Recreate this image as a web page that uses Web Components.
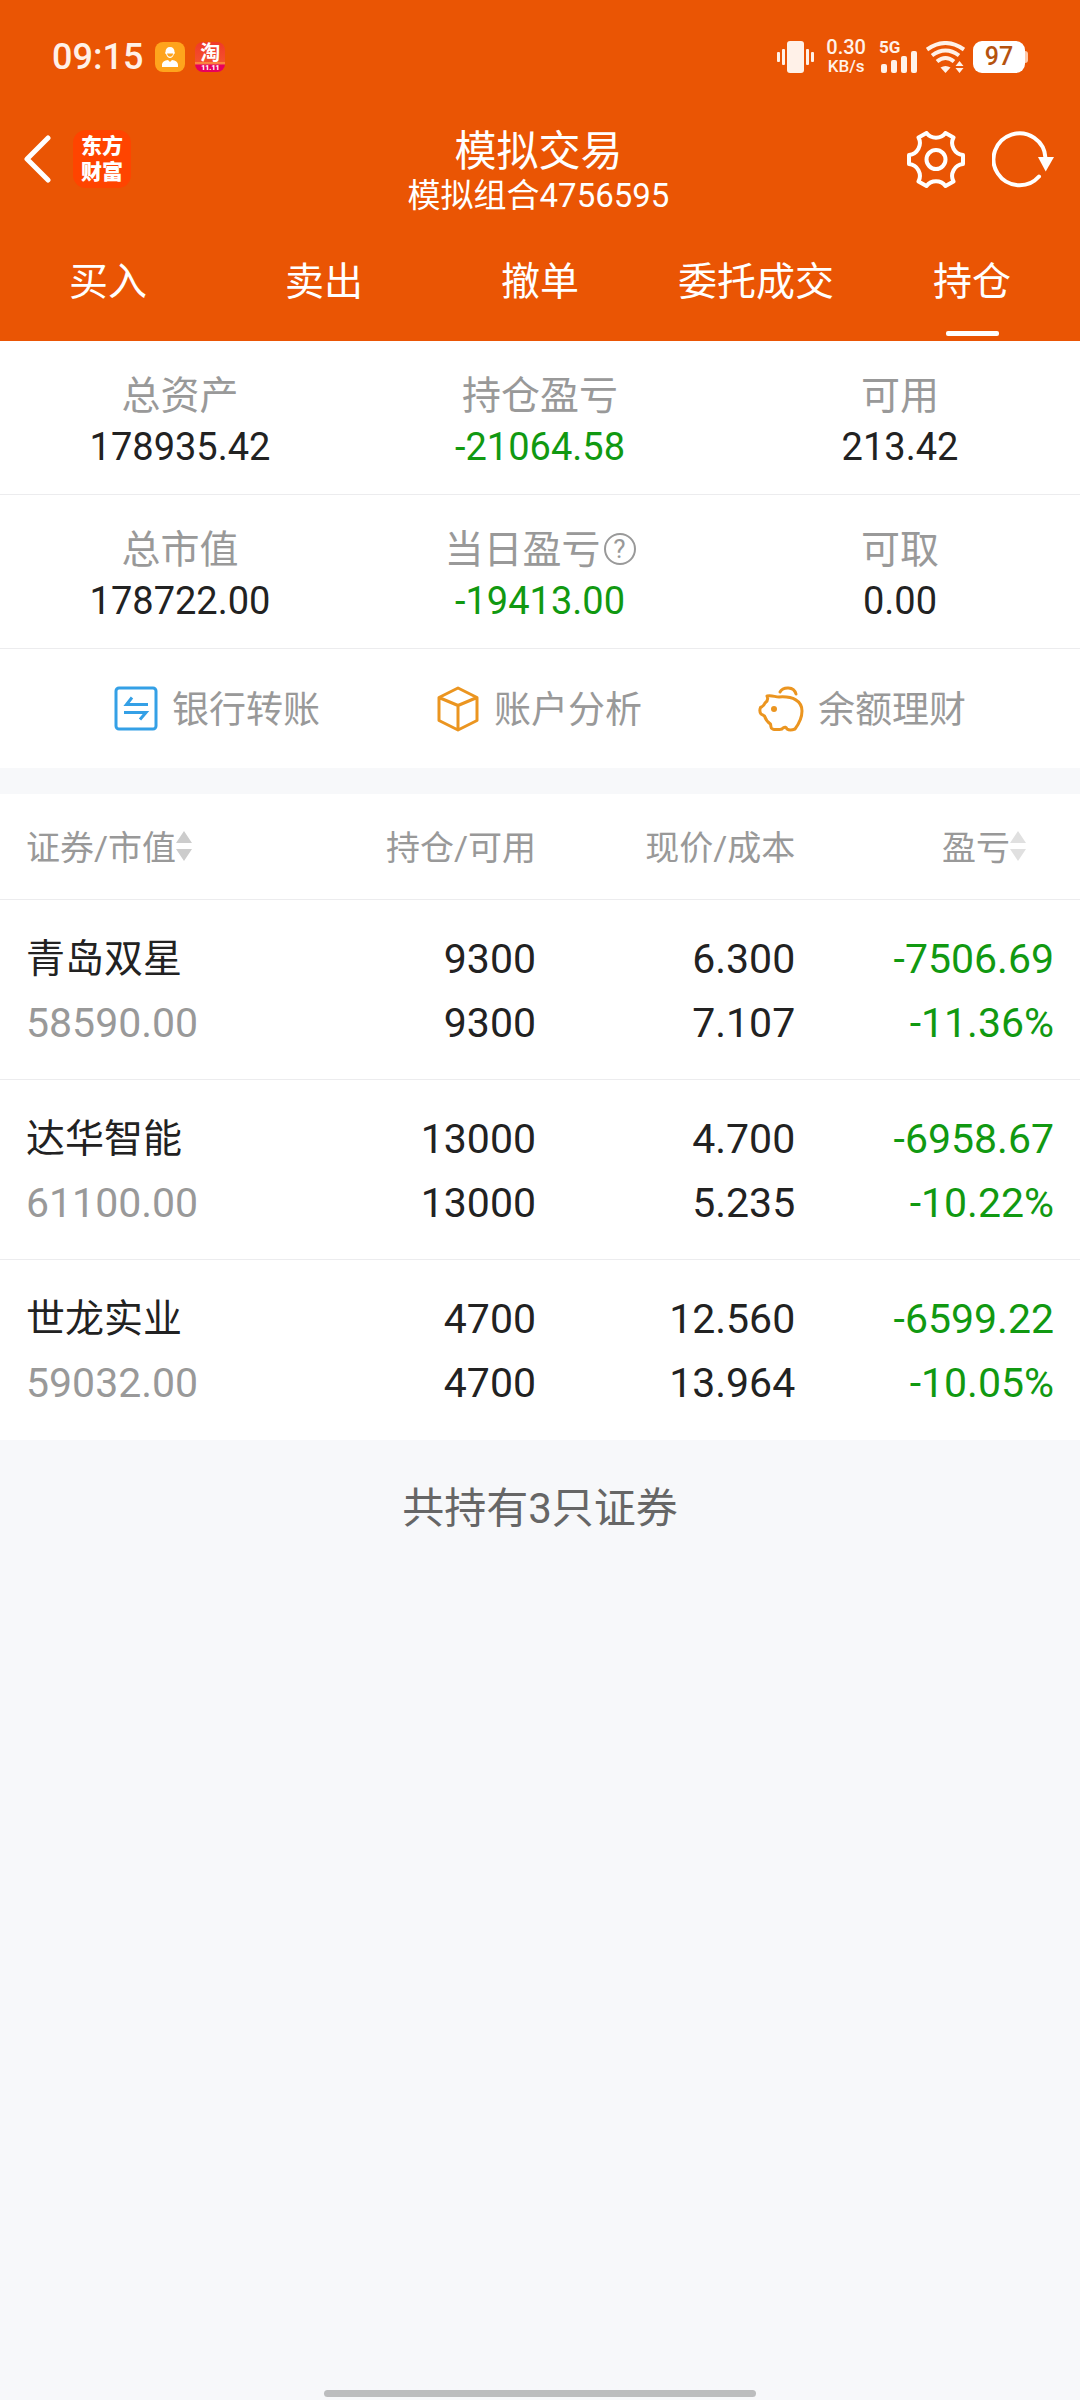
<!DOCTYPE html>
<html lang="zh-CN">
<head>
<meta charset="utf-8">
<meta name="viewport" content="width=device-width, initial-scale=1">
<title>模拟交易</title>
<style>
    :root {
        --brand: #ea5504;
        --ink: #222;
        --muted: #999;
        --fall: #119911;
        --line: #ececee;
        --page: #f7f8fa;
    }
    body {
        margin: 0;
        min-height: 100vh;
        display: flex;
        flex-direction: column;
        background: var(--page);
        color: var(--ink);
        font-family: Roboto, "Noto Sans CJK SC", sans-serif;
    }
    header {
        background: var(--brand);
        color: #fff;
    }
    .summary {
        background: #fff;
        margin-bottom: 26px;
    }
</style>
</head>
<body>

<header>
    <status-bar time="09:15" speed="0.30" battery="97"></status-bar>
    <title-bar>
        模拟交易
        <span slot="account">模拟组合4756595</span>
    </title-bar>
    <tab-list>
        <tab-link>买入</tab-link>
        <tab-link>卖出</tab-link>
        <tab-link>撤单</tab-link>
        <tab-link>委托成交</tab-link>
        <tab-link active>持仓</tab-link>
    </tab-list>
</header>

<main>
    <section class="summary">
        <figure-row>
            <asset-figure label="总资产">178935.42</asset-figure>
            <asset-figure label="持仓盈亏" fall>-21064.58</asset-figure>
            <asset-figure label="可用">213.42</asset-figure>
        </figure-row>
        <figure-row>
            <asset-figure label="总市值">178722.00</asset-figure>
            <asset-figure label="当日盈亏" fall help>-19413.00</asset-figure>
            <asset-figure label="可取">0.00</asset-figure>
        </figure-row>
        <service-links></service-links>
    </section>
    <holdings-table></holdings-table>
</main>

<home-indicator></home-indicator>

<script>
class StatusBar extends HTMLElement {

    constructor() {
        super();
        this.shadow = this.attachShadow({ mode: 'open' });
    }

    connectedCallback() {
        this.render();
    }

    render() {

        this.shadow.innerHTML =
        `
        <style>
            :host {
                display: flex;
                align-items: center;
                height: 114px;
                padding: 0 52px;
                color: #fff1e8;
                font-weight: 500;
            }
            svg {
                display: block;
            }
            .time {
                font-size: 36px;
                line-height: 40px;
                margin-right: 12px;
            }
            .app {
                width: 30px;
                height: 30px;
                border-radius: 8px;
                overflow: hidden;
                margin-right: 10px;
            }
            .contact {
                background: #ffa41c;
            }
            .taobao {
                background: linear-gradient(180deg, #f03a28 0, #f4502c 65%, #ffa040 70%, #e8005c 78%);
                color: #fff;
                text-align: center;
            }
            .taobao b {
                display: block;
                font-size: 20px;
                line-height: 23px;
            }
            .taobao small {
                display: block;
                font-size: 7px;
                font-weight: 900;
                line-height: 7px;
            }
            .right {
                display: flex;
                align-items: center;
                margin-left: auto;
            }
            .speed {
                margin: 0 13px 0 12px;
                text-align: center;
                font-size: 20px;
                line-height: 19px;
            }
            .speed small {
                display: block;
                font-size: 17px;
            }
            .signal {
                margin-right: 9px;
                font-size: 17px;
                font-weight: 700;
                line-height: 12px;
            }
            .signal svg {
                margin: -2px 0 0 2px;
            }
            .battery {
                display: flex;
                align-items: center;
                margin-left: 8px;
            }
            .battery span {
                width: 52px;
                background: #fff;
                border-radius: 9px;
                color: #b5530f;
                font-size: 25px;
                line-height: 32px;
                text-align: center;
            }
            .battery::after {
                content: "";
                width: 3px;
                height: 12px;
                border-radius: 0 3px 3px 0;
                background: #ffc9a8;
            }
        </style>
        <span class="time">${this.getAttribute('time')}</span>
        <div class="app contact">
            <svg width="30" height="30" viewBox="0 0 30 30" fill="#fff">
                <path d="M15 5c3 0 4.500 2 4.500 5 1 1 0 2-.600 2-.700 2.500-2.200 4-3.900 4s-3.200-1.500-3.900-4c-.600 0-1.600-1-.600-2C10.500 7 12 5 15 5z"/>
                <path d="M12 11.500h6.200c-.500 2.200-1.500 3.300-3.100 3.300S12.500 13.700 12 11.500z" fill="#ffa41c"/>
                <path d="M7 25v-2c0-3 2.500-4.500 6-5l2 2 2-2c3.500.5 6 2 6 5v2z"/>
            </svg>
        </div>
        <div class="app taobao"><b>淘</b><small>11.11</small></div>
        <div class="right">
            <svg width="37" height="32" viewBox="0 0 37 32" fill="currentColor">
                <rect x="10" y="0" width="17" height="32" rx="3"/>
                <rect x="0" y="11" width="3" height="10" rx="1"/>
                <rect x="5" y="8" width="3" height="16" rx="1"/>
                <rect x="29" y="8" width="3" height="16" rx="1"/>
                <rect x="34" y="11" width="3" height="10" rx="1"/>
            </svg>
            <div class="speed">${this.getAttribute('speed')}<small>KB/s</small></div>
            <div class="signal">5G
                <svg width="36" height="22" viewBox="0 0 36 22" fill="currentColor">
                    <rect x="0" y="13" width="6" height="9" rx="2"/>
                    <rect x="10" y="9" width="6" height="13" rx="2"/>
                    <rect x="20" y="5" width="6" height="17" rx="2"/>
                    <rect x="30" y="0" width="6" height="22" rx="2"/>
                </svg>
            </div>
            <svg width="39" height="32" viewBox="0 0 39 32" fill="none" stroke="currentColor" stroke-width="4">
                <path d="M1 8.500Q19.500-4.500 38 8.500"/>
                <path d="M6 14.500Q19.500 4.500 33 14.500"/>
                <path d="M11 20.500Q19.500 13.500 28 20.500"/>
                <path d="M14.500 26.500Q19.500 23.500 24.500 26.500L19.500 32z" fill="currentColor" stroke="none"/>
                <path d="M29.500 25l4-5 4 5zM29.500 27h8l-4 5z" fill="currentColor" stroke="none"/>
            </svg>
            <div class="battery"><span>${this.getAttribute('battery')}</span></div>
        </div>`;
    }
}

class TitleBar extends HTMLElement {

    constructor() {
        super();
        this.shadow = this.attachShadow({ mode: 'open' });
    }

    connectedCallback() {
        this.render();
    }

    render() {

        this.shadow.innerHTML =
        `
        <style>
            :host {
                display: grid;
                grid-template-columns: 1fr auto 1fr;
                padding: 12px 26px 0 23px;
            }
            svg {
                display: block;
            }
            .side {
                display: flex;
                align-items: center;
                height: 66px;
            }
            .left {
                gap: 22px;
            }
            .right {
                gap: 27px;
                justify-content: flex-end;
            }
            button {
                border: none;
                background: none;
                color: inherit;
                padding: 0;
            }
            .logo {
                width: 58px;
                height: 52px;
                padding: 3px 0;
                border-radius: 13px;
                background: #ff4400;
                font-size: 21px;
                font-weight: 900;
                line-height: 26px;
                text-align: center;
            }
            h1 {
                margin: 0;
                text-align: center;
                font-size: 42px;
                font-weight: 400;
                line-height: 52px;
            }
            p {
                margin: 0;
                text-align: center;
                font-size: 33px;
                line-height: 36px;
            }
        </style>
        <div class="side left">
            <button aria-label="返回">
                <svg width="28" height="48" viewBox="0 0 28 48" fill="none" stroke="currentColor" stroke-width="5" stroke-linecap="round" stroke-linejoin="round">
                    <path d="M25 3L4 24l21 21"/>
                </svg>
            </button>
            <div class="logo">东方<br>财富</div>
        </div>
        <div>
            <h1><slot></slot></h1>
            <p><slot name="account"></slot></p>
        </div>
        <div class="side right">
            <button aria-label="设置">
                <svg width="58" height="57" viewBox="0 0 58 57" fill="none" stroke="currentColor" stroke-width="4" stroke-linejoin="round">
                    <path d="M19.500 2A12 12 0 0 0 38.500 2L46.500 6.500A12 12 0 0 0 56 24V33A12 12 0 0 0 46.500 50.500L38.500 55A12 12 0 0 0 19.500 55L11.500 50.500A12 12 0 0 0 2 33V24A12 12 0 0 0 11.500 6.500z"/>
                    <circle cx="29" cy="28.500" r="9.500"/>
                </svg>
            </button>
            <button aria-label="刷新">
                <svg width="62" height="57" viewBox="0 0 62 57" fill="none" stroke="currentColor" stroke-width="4" stroke-linecap="round">
                    <path d="M53.500 27A26 26 0 1 0 47 45.500"/>
                    <path d="M46 26h16l-8.300 14.500z" fill="currentColor" stroke="none"/>
                </svg>
            </button>
        </div>`;
    }
}

class TabList extends HTMLElement {

    constructor() {
        super();
        this.shadow = this.attachShadow({ mode: 'open' });
    }

    connectedCallback() {
        this.shadow.innerHTML =
        `
        <style>
            :host {
                display: block;
            }
            nav {
                display: grid;
                grid-template-columns: repeat(5, 1fr);
            }
        </style>
        <nav><slot></slot></nav>`;
    }
}

class TabLink extends HTMLElement {

    constructor() {
        super();
        this.shadow = this.attachShadow({ mode: 'open' });
    }

    connectedCallback() {
        this.shadow.innerHTML =
        `
        <style>
            :host {
                display: block;
            }
            a {
                display: flex;
                flex-direction: column;
                align-items: center;
                padding: 40px 0 5px;
                color: inherit;
                text-decoration: none;
                font-size: 39px;
                line-height: 56px;
            }
            a::after {
                content: "";
                width: 53px;
                height: 5px;
                margin-top: 21px;
                border-radius: 2px;
            }
            :host([active]) a::after {
                background: #fff;
            }
        </style>
        <a href="#"><slot></slot></a>`;
    }
}

class FigureRow extends HTMLElement {

    constructor() {
        super();
        this.shadow = this.attachShadow({ mode: 'open' });
    }

    connectedCallback() {
        this.shadow.innerHTML =
        `
        <style>
            :host {
                display: grid;
                grid-template-columns: repeat(3, 1fr);
                padding: 30px 0 21px;
                border-bottom: 1px solid var(--line);
            }
        </style>
        <slot></slot>`;
    }
}

class AssetFigure extends HTMLElement {

    constructor() {
        super();
        this.shadow = this.attachShadow({ mode: 'open' });
    }

    connectedCallback() {
        this.render();
    }

    render() {

        const help = this.hasAttribute('help') ? '<button aria-label="说明">?</button>' : '';

        this.shadow.innerHTML =
        `
        <style>
            :host {
                display: block;
                font-size: 38px;
                line-height: 51px;
            }
            .label {
                display: flex;
                align-items: center;
                justify-content: center;
                gap: 3px;
                color: var(--muted);
                font-size: 39px;
            }
            .value {
                text-align: center;
            }
            :host([fall]) .value {
                color: var(--fall);
            }
            button {
                box-sizing: border-box;
                width: 32px;
                height: 32px;
                margin-bottom: 4px;
                padding: 0;
                border: 2px solid;
                border-radius: 50%;
                background: none;
                color: inherit;
                font: 26px/28px Roboto, sans-serif;
            }
        </style>
        <div class="label">${this.getAttribute('label')}${help}</div>
        <div class="value"><slot></slot></div>`;
    }
}

class ServiceLinks extends HTMLElement {

    constructor() {
        super();
        this.shadow = this.attachShadow({ mode: 'open' });
    }

    connectedCallback() {
        this.render();
    }

    render() {

        this.shadow.innerHTML =
        `
        <style>
            :host {
                display: flex;
                justify-content: center;
                gap: 116px;
            }
            a {
                display: flex;
                align-items: center;
                gap: 14px;
                color: var(--muted);
                text-decoration: none;
                font-size: 37px;
                line-height: 115px;
                padding-top: 4px;
            }
            svg {
                margin-bottom: 4px;
            }
        </style>
        <a href="#">
            <svg width="44" height="46" viewBox="0 0 44 46" fill="none" stroke="#34a0e6" stroke-width="3">
                <rect x="2" y="2" width="40" height="41" rx="3"/>
                <path d="M34 18.500H12.500L18 11.500M10 26.500H32L26 33.500"/>
            </svg>
            银行转账
        </a>
        <a href="#">
            <svg width="44" height="46" viewBox="0 0 44 46" fill="none" stroke="#eb9520" stroke-width="3" stroke-linejoin="round">
                <path d="M22 2L41 11.500V34.500L22 44L3 34.500V11.500zM3 11.500L22 19.500L41 11.500M22 19.500V44"/>
            </svg>
            账户分析
        </a>
        <a href="#">
            <svg width="46" height="46" viewBox="0 0 46 46" fill="none" stroke="#eb9520" stroke-width="3" stroke-linecap="round" stroke-linejoin="round">
                <path d="M9 10C14 9 17 11 21 11C35 10 44 15 44 25C44 33 40 39 37 43Q32 45 29 43Q28 40 25 42Q24 44 20 43.500Q13 44 13 41L12.500 38Q8 35 6.500 30L3 28Q1 25 2.500 21.500Q6 20 7 17Q11 14 9 10z"/>
                <path d="M22 6C25 .5 36 0 38 8"/>
                <circle cx="16" cy="23" r="3" fill="#eb9520" stroke="none"/>
            </svg>
            余额理财
        </a>`;
    }
}

class HoldingsTable extends HTMLElement {

    constructor() {
        super();
        this.shadow = this.attachShadow({ mode: 'open' });
        this.holdings = [
            { name: '青岛双星', value: '58590.00', held: '9300', free: '9300', price: '6.300', cost: '7.107', profit: '-7506.69', rate: '-11.36%' },
            { name: '达华智能', value: '61100.00', held: '13000', free: '13000', price: '4.700', cost: '5.235', profit: '-6958.67', rate: '-10.22%' },
            { name: '世龙实业', value: '59032.00', held: '4700', free: '4700', price: '12.560', cost: '13.964', profit: '-6599.22', rate: '-10.05%' },
        ];
    }

    connectedCallback() {
        this.render();
    }

    render() {

        const arrows = '<svg width="16" height="30" viewBox="0 0 16 30" fill="currentColor"><path d="M8 0l8 12H0zM0 18h16L8 30z"/></svg>';

        const rows = this.holdings.map(item => `
            <tr>
                <td><span class="name">${item.name}</span><span class="value">${item.value}</span></td>
                <td><span>${item.held}</span><span>${item.free}</span></td>
                <td><span>${item.price}</span><span>${item.cost}</span></td>
                <td class="fall"><span>${item.profit}</span><span>${item.rate}</span></td>
            </tr>`).join('');

        this.shadow.innerHTML =
        `
        <style>
            :host {
                display: block;
            }
            table {
                width: 100%;
                table-layout: fixed;
                border-spacing: 0;
                background: #fff;
            }
            th, td {
                padding: 0 4px 0 0;
                border-bottom: 1px solid var(--line);
                text-align: right;
            }
            th {
                height: 103px;
                padding-bottom: 2px;
                color: var(--muted);
                font-size: 34px;
                font-weight: 400;
            }
            td {
                padding-top: 27px;
                padding-bottom: 24px;
                font-size: 41px;
                line-height: 64px;
            }
            tr:last-child td {
                border-bottom-color: #fff;
            }
            th:first-child, td:first-child {
                width: 30%;
                padding-left: 26px;
                box-sizing: border-box;
                text-align: left;
            }
            th:nth-child(2) {
                width: 20%;
                box-sizing: border-box;
            }
            th:nth-child(3) {
                width: 24%;
                box-sizing: border-box;
            }
            th:last-child, td:last-child {
                padding-right: 26px;
            }
            td span {
                display: block;
            }
            .name {
                font-size: 39px;
            }
            .value {
                color: var(--muted);
            }
            .fall {
                color: var(--fall);
            }
            button {
                display: inline-flex;
                align-items: center;
                padding: 0;
                border: none;
                background: none;
                color: inherit;
                font: inherit;
            }
            svg {
                color: #ccc;
            }
            th:last-child button {
                margin-right: 28px;
            }
            th:last-child svg {
                color: #e0e0e0;
            }
            p {
                margin: 0;
                padding-top: 4px;
                color: #666;
                font-size: 42px;
                line-height: 130px;
                text-align: center;
            }
        </style>
        <table>
            <thead>
                <tr>
                    <th><button>证券/市值${arrows}</button></th>
                    <th>持仓/可用</th>
                    <th>现价/成本</th>
                    <th><button>盈亏${arrows}</button></th>
                </tr>
            </thead>
            <tbody>${rows}</tbody>
        </table>
        <p>共持有${this.holdings.length}只证券</p>`;
    }
}

class HomeIndicator extends HTMLElement {

    constructor() {
        super();
        this.shadow = this.attachShadow({ mode: 'open' });
    }

    connectedCallback() {
        this.shadow.innerHTML =
        `
        <style>
            :host {
                display: block;
                width: 40%;
                height: 7px;
                margin: auto auto 3px;
                border-radius: 4px;
                background: #bcbdbe;
            }
        </style>`;
    }
}

customElements.define('status-bar', StatusBar);
customElements.define('title-bar', TitleBar);
customElements.define('tab-list', TabList);
customElements.define('tab-link', TabLink);
customElements.define('figure-row', FigureRow);
customElements.define('asset-figure', AssetFigure);
customElements.define('service-links', ServiceLinks);
customElements.define('holdings-table', HoldingsTable);
customElements.define('home-indicator', HomeIndicator);
</script>
</body>
</html>
